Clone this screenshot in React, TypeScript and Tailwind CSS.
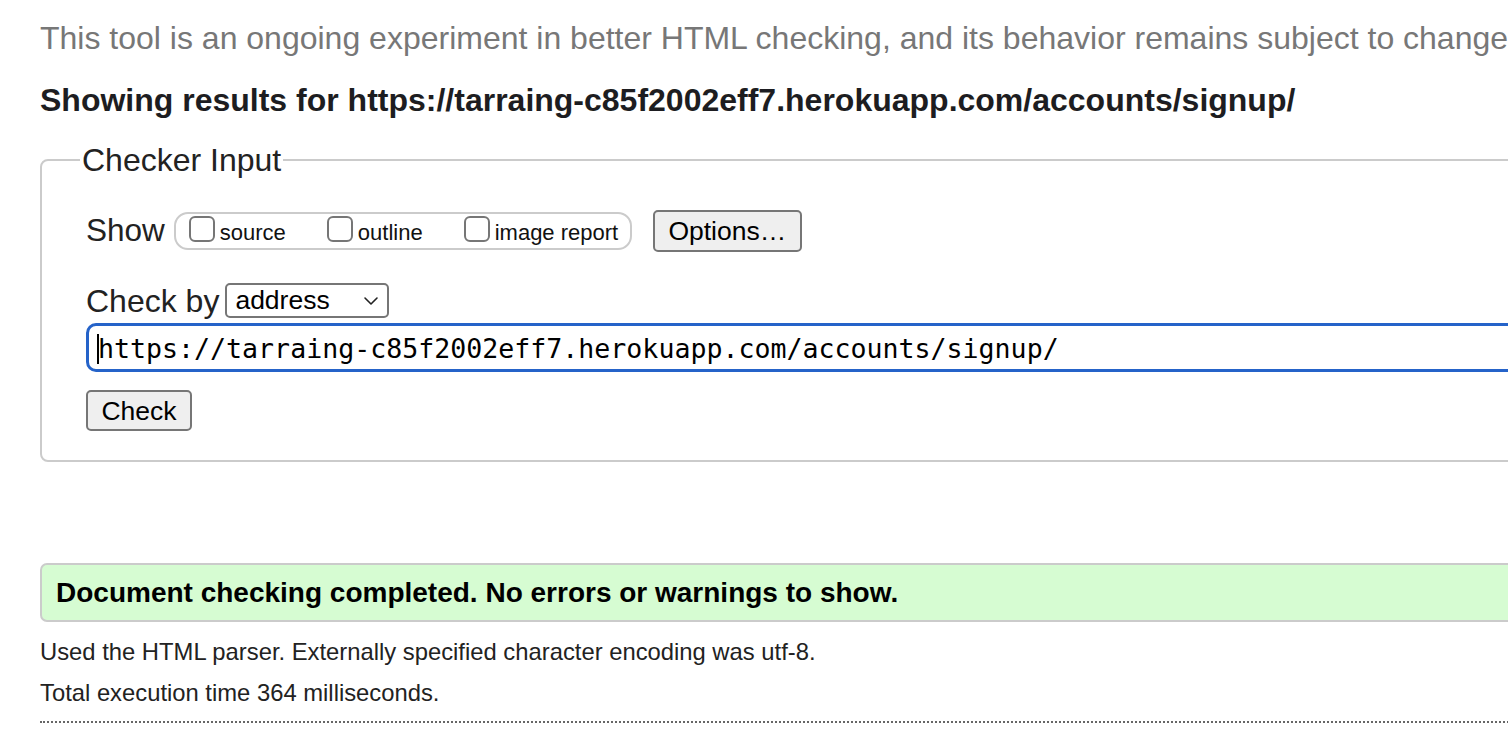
import { ChevronDown } from 'lucide-react';

function Box({ label, className }: { label: string; className?: string }) {
  return (
    <label className={`flex items-center ${className ?? ''}`}>
      <span className="w-[26px] h-[26px] rounded-[6px] border-2 border-[#767676] bg-white -mt-[4px]" />
      <span className="ml-[5px] mt-[4px] text-[22px] leading-[26px] text-[#111]">{label}</span>
    </label>
  );
}

export default function App() {
  return (
    <div className="w-full h-[740px] overflow-hidden bg-white font-['Liberation_Sans',Arial,sans-serif]">
      <div className="w-[1700px] pl-[40px]">
        <p className="mt-[20px] text-[32px] leading-[36px] text-[#777] whitespace-nowrap">
          This tool is an ongoing experiment in better HTML checking, and its behavior remains subject to change
        </p>
        <h2 className="mt-[26px] text-[32px] leading-[36px] font-bold text-[#1d1d21] whitespace-nowrap">
          Showing results for https://tarraing-c85f2002eff7.herokuapp.com/accounts/signup/
        </h2>

        {/* Checker input panel — runs off the right edge in the shot */}
        <fieldset className="mt-[24px] w-[1600px] border-2 border-[#cbcbcb] rounded-[8px] pl-[44px] pb-[29px]">
          <legend className="-ml-[6px] px-[2px] text-[32px] leading-[36px] text-[#222]">Checker Input</legend>

          <div className="mt-[32px] h-[42px] flex items-center">
            <span className="text-[31.5px] text-[#222]">Show</span>
            <div className="ml-[9px] w-[458px] h-[38px] rounded-[14px] border-2 border-[#cbcbcb] flex items-center pl-[13px]">
              <Box label="source" />
              <Box label="outline" className="ml-[41px]" />
              <Box label="image report" className="ml-[41px]" />
            </div>
            <button className="ml-[21px] w-[149px] h-[42px] bg-[#efefef] border-2 border-[#767676] rounded-[5px] text-[26.5px] text-black">
              Options…
            </button>
          </div>

          <div className="mt-[31px] h-[35px] flex items-center">
            <span className="text-[32px] text-[#222]">Check by</span>
            <div className="ml-[6px] w-[164px] h-[35px] border-2 border-[#767676] rounded-[5px] bg-white flex items-center pl-[8px] pr-[4px]">
              <span className="text-[26.5px] text-black flex-1">address</span>
              <ChevronDown size={24} strokeWidth={1.6} className="text-[#222]" />
            </div>
          </div>

          <div className="mt-[5px] h-[49px] w-[1500px] border-[3px] border-[#2563c9] rounded-[10px] flex items-center pl-[8px]">
            <span className="w-[2px] h-[30px] bg-black mt-[2px]" />
            <span className="mt-[3px] text-[26.6px] text-black font-['DejaVu_Sans_Mono',monospace] -ml-[1px]">
              https://tarraing-c85f2002eff7.herokuapp.com/accounts/signup/
            </span>
          </div>

          <button className="mt-[18px] w-[106px] h-[41px] bg-[#efefef] border-2 border-[#767676] rounded-[5px] text-[26.5px] text-black">
            Check
          </button>
        </fieldset>

        <div className="mt-[101px] w-[1600px] h-[59px] bg-[#d6fcd2] border-2 border-[#cbcbcb] rounded-[7px] flex items-center pl-[14px]">
          <span className="text-[28px] font-bold text-black">Document checking completed. No errors or warnings to show.</span>
        </div>

        <p className="mt-[15px] text-[23.8px] leading-[30px] text-[#222]">
          Used the HTML parser. Externally specified character encoding was utf-8.
        </p>
        <p className="mt-[11px] text-[23.8px] leading-[30px] text-[#222]">Total execution time 364 milliseconds.</p>
        <div className="mt-[13px] w-[1600px] border-t-2 border-dotted border-[#666]" />
      </div>
    </div>
  );
}
